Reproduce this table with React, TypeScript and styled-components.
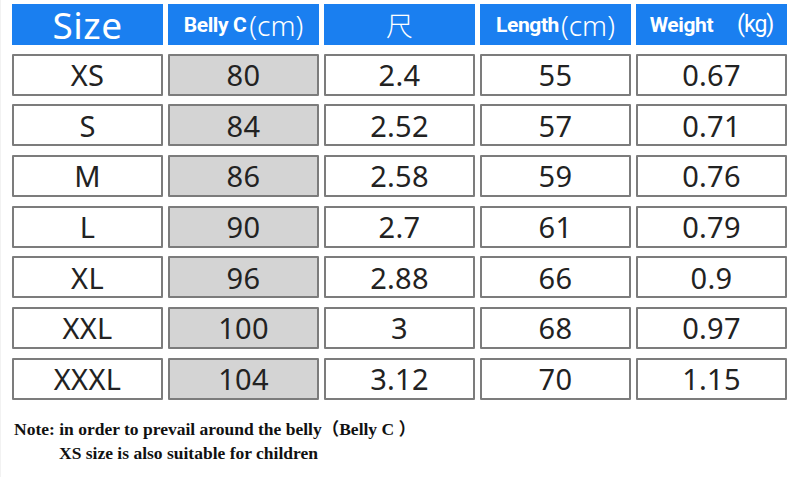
import React, { ReactElement } from 'react'
import styled, { createGlobalStyle } from 'styled-components'

const GlobalStyle = createGlobalStyle`
    html, body {
        margin: 0;
        padding: 0;
        background: #ffffff;
    }
`

const Page = styled.div`
    width: 800px;
    height: 477px;
    box-sizing: border-box;
    padding: 4px 0 0 11px;
    border-left: 1px solid #f2f2f2;
    overflow: hidden;
`

const Table = styled.div`
    display: grid;
    grid-template-columns: repeat(5, 151px);
    grid-template-rows: 41px repeat(7, 42px);
    column-gap: 5px;
    row-gap: 8.67px;
`

const HeadCell = styled.div`
    display: flex;
    align-items: center;
    justify-content: center;
    background: #1a7ff0;
    color: #ffffff;
    font-family: 'Noto Sans', sans-serif;
    white-space: nowrap;
`

const BigLabel = styled.span`
    font-size: 37px;
    line-height: 1;
    letter-spacing: 0.5px;
`

const BoldLabel = styled.span`
    font-family: Roboto, sans-serif;
    font-weight: 700;
    font-size: 21px;
    letter-spacing: -0.4px;
`

const Unit = styled.span<{ $gap?: number }>`
    font-size: 28px;
    font-weight: 300;
    margin-left: ${p => p.$gap ?? 3}px;
    line-height: 1;
`

const SmallUnit = styled.span`
    font-family: Roboto, sans-serif;
    font-size: 23px;
    margin-left: 24px;
    letter-spacing: -1px;
`

const Cjk = styled.span`
    font-family: 'Noto Sans CJK SC', sans-serif;
    font-size: 27px;
    font-weight: 300;
    line-height: 1;
`

const Cell = styled.div<{ $shade?: boolean }>`
    display: flex;
    align-items: center;
    justify-content: center;
    box-sizing: border-box;
    border: 2px solid #7c7c7c;
    border-radius: 1px;
    background: ${p => (p.$shade ? '#d4d4d4' : '#ffffff')};
    color: #222222;
    font-family: 'Noto Sans', sans-serif;
    font-size: 29px;
    letter-spacing: 0.3px;
`

const Note = styled.div`
    margin-top: 17px;
    padding-left: 2px;
    font-family: 'Liberation Serif', 'Noto Sans CJK SC', serif;
    font-weight: 700;
    font-size: 17.5px;
    line-height: 24px;
    color: #111111;
`

const NoteLine = styled.div<{ $indent?: number }>`
    padding-left: ${p => p.$indent ?? 0}px;
`

const rows = [
    ['XS', '80', '2.4', '55', '0.67'],
    ['S', '84', '2.52', '57', '0.71'],
    ['M', '86', '2.58', '59', '0.76'],
    ['L', '90', '2.7', '61', '0.79'],
    ['XL', '96', '2.88', '66', '0.9'],
    ['XXL', '100', '3', '68', '0.97'],
    ['XXXL', '104', '3.12', '70', '1.15'],
]

export default function App(): ReactElement {
    return (
        <Page>
            <GlobalStyle />
            <Table>
                <HeadCell><BigLabel>Size</BigLabel></HeadCell>
                <HeadCell><BoldLabel>Belly C</BoldLabel><Unit>(cm)</Unit></HeadCell>
                <HeadCell><Cjk>尺</Cjk></HeadCell>
                <HeadCell><BoldLabel>Length</BoldLabel><Unit $gap={2}>(cm)</Unit></HeadCell>
                <HeadCell><BoldLabel>Weight</BoldLabel><SmallUnit>(kg)</SmallUnit></HeadCell>
                {rows.map(r =>
                    r.map((v, i) => (
                        <Cell key={r[0] + i} $shade={i === 1}>{v}</Cell>
                    ))
                )}
            </Table>
            <Note>
                <NoteLine>Note: in order to prevail around the belly（Belly C ）</NoteLine>
                <NoteLine $indent={45}>XS size is also suitable for children</NoteLine>
            </Note>
        </Page>
    )
}
